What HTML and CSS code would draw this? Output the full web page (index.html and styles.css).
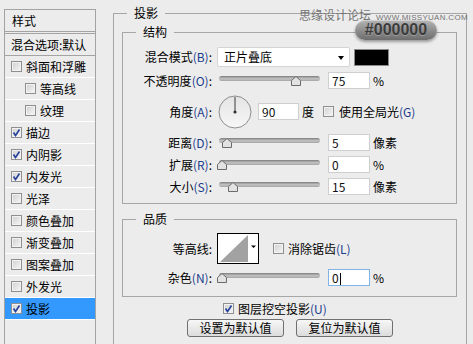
FILE: index.html
```html
<!DOCTYPE html>
<html lang="zh-CN">
<head>
  <meta charset="UTF-8">
  <title>图层样式 - 投影</title>
  <link rel="stylesheet" href="styles.css">
</head>
<body>

  <div class="dialog">
    <!-- 左侧样式列表 -->
    <ul class="style-list">
      <li class="head">样式</li>
      <li class="blend">混合选项:默认</li>
      <li><span class="cb"></span>斜面和浮雕</li>
      <li class="sub"><span class="cb"></span>等高线</li>
      <li class="sub"><span class="cb"></span>纹理</li>
      <li><span class="cb on"><svg viewBox="0 0 9 9"><path d="M1.5 4.5l2 3 4-6"/></svg></span>描边</li>
      <li><span class="cb on"><svg viewBox="0 0 9 9"><path d="M1.5 4.5l2 3 4-6"/></svg></span>内阴影</li>
      <li><span class="cb on"><svg viewBox="0 0 9 9"><path d="M1.5 4.5l2 3 4-6"/></svg></span>内发光</li>
      <li><span class="cb"></span>光泽</li>
      <li><span class="cb"></span>颜色叠加</li>
      <li><span class="cb"></span>渐变叠加</li>
      <li><span class="cb"></span>图案叠加</li>
      <li><span class="cb"></span>外发光</li>
      <li class="active"><span class="cb on"><svg viewBox="0 0 9 9"><path d="M1.5 4.5l2 3 4-6"/></svg></span>投影</li>
    </ul>

    <div class="panel">
      <div class="group outer">
        <span class="group-title">投影</span>

        <!-- 结构 -->
        <div class="group inner">
          <span class="group-title">结构</span>

          <div class="row r-mode">
            <span class="lbl">混合模式<span class="key">(B)</span>:</span>
            <div class="select">正片叠底</div>
            <div class="swatch"></div>
          </div>

          <div class="row">
            <span class="lbl">不透明度<span class="key">(O)</span>:</span>
            <div class="slider"><div class="track"></div><svg class="thumb" style="left:74px" viewBox="0 0 10 10"><polygon points="0.5,9.5 0.5,4.5 5,0.5 9.5,4.5 9.5,9.5"/></svg></div>
            <div class="num">75</div>
            <span class="unit">%</span>
          </div>

          <div class="row r-angle">
            <span class="lbl">角度<span class="key">(A)</span>:</span>
            <svg class="dial" viewBox="0 0 34 34">
              <defs>
                <linearGradient id="dialFill" x1="0" y1="0" x2="0" y2="1">
                  <stop offset="0" stop-color="#e4e4e4"/>
                  <stop offset="1" stop-color="#f7f7f7"/>
                </linearGradient>
              </defs>
              <circle cx="17" cy="17" r="16" fill="url(#dialFill)" stroke="#8e8e8e"/>
              <line x1="17" y1="17" x2="17" y2="2" stroke="#3a3a3a"/>
              <circle cx="17" cy="17" r="1.6" fill="#333"/>
            </svg>
            <div class="num short">90</div>
            <span class="unit">度</span>
            <span class="cb global"></span>
            <span class="cb-text">使用全局光<span class="key">(G)</span></span>
          </div>

          <div class="row">
            <span class="lbl">距离<span class="key">(D)</span>:</span>
            <div class="slider"><div class="track"></div><svg class="thumb" style="left:5px" viewBox="0 0 10 10"><polygon points="0.5,9.5 0.5,4.5 5,0.5 9.5,4.5 9.5,9.5"/></svg></div>
            <div class="num">5</div>
            <span class="unit">像素</span>
          </div>

          <div class="row">
            <span class="lbl">扩展<span class="key">(R)</span>:</span>
            <div class="slider"><div class="track"></div><svg class="thumb" style="left:0px" viewBox="0 0 10 10"><polygon points="0.5,9.5 0.5,4.5 5,0.5 9.5,4.5 9.5,9.5"/></svg></div>
            <div class="num">0</div>
            <span class="unit">%</span>
          </div>

          <div class="row">
            <span class="lbl">大小<span class="key">(S)</span>:</span>
            <div class="slider"><div class="track"></div><svg class="thumb" style="left:11px" viewBox="0 0 10 10"><polygon points="0.5,9.5 0.5,4.5 5,0.5 9.5,4.5 9.5,9.5"/></svg></div>
            <div class="num">15</div>
            <span class="unit">像素</span>
          </div>
        </div>

        <!-- 品质 -->
        <div class="group inner quality">
          <span class="group-title">品质</span>

          <div class="row r-contour">
            <span class="lbl">等高线:</span>
            <svg class="contour" viewBox="0 0 42 31">
              <rect x="0.5" y="0.5" width="41" height="30" fill="#fff" stroke="#000"/>
              <polygon points="3,29 31,2 31,29" fill="#a2a2a2"/>
              <polygon points="34,12.5 39,12.5 36.5,15" fill="#000"/>
            </svg>
            <span class="cb aa"></span>
            <span class="cb-text">消除锯齿<span class="key">(L)</span></span>
          </div>

          <div class="row">
            <span class="lbl">杂色<span class="key">(N)</span>:</span>
            <div class="slider"><div class="track"></div><svg class="thumb" style="left:0px" viewBox="0 0 10 10"><polygon points="0.5,9.5 0.5,4.5 5,0.5 9.5,4.5 9.5,9.5"/></svg></div>
            <div class="num focus">0<span class="caret"></span></div>
            <span class="unit">%</span>
          </div>
        </div>

        <div class="knockout">
          <span class="cb on"><svg viewBox="0 0 9 9"><path d="M1.5 4.5l2 3 4-6"/></svg></span>
          <span class="cb-text">图层挖空投影<span class="key">(U)</span></span>
        </div>

        <div class="buttons">
          <button class="btn">设置为默认值</button>
          <button class="btn">复位为默认值</button>
        </div>
      </div>
    </div>
  </div>

  <!-- 水印 -->
  <div class="watermark">思缘设计论坛<span class="url">WWW.MISSYUAN.COM</span></div>
  <div class="badge">#000000</div>

</body>
</html>
```

FILE: styles.css
```css
* { box-sizing: border-box; }
body {
  margin: 0;
  width: 473px;
  height: 344px;
  overflow: hidden;
  position: relative;
  background: #ececec;
  color: #000;
  font-family: "Noto Sans CJK SC", "Liberation Sans", sans-serif;
  font-size: 12px;
  line-height: 16px;
}
.dialog {
  display: flex;
  padding: 9px 0 0 4px;
}

/* 样式列表 */
.style-list {
  list-style: none;
  margin: 0;
  padding: 0;
  width: 92px;
  height: 340px;
  border: 1px solid #a3a3a3;
  border-bottom: 0;
  flex: none;
}
.style-list li {
  display: flex;
  align-items: center;
  height: 22px;
  padding-left: 6px;
  border-bottom: 1px solid #fff;
  white-space: nowrap;
}
.style-list .head {
  height: 24px;
  padding-left: 7px;
  border-bottom: 3px double #a3a3a3;
}
.style-list .blend {
  border-bottom-color: #a3a3a3;
}
.style-list .sub { padding-left: 20px; }
.style-list .active { background: #3399ff; }

.cb {
  display: inline-block;
  flex: none;
  width: 11px;
  height: 11px;
  margin-right: 4px;
  border: 1px solid #8f8f8f;
  background: linear-gradient(135deg, #cfcfcf, #f7f7f7);
  box-shadow: inset 0 0 0 1px #f2f2f2;
  position: relative;
}
.cb svg {
  position: absolute;
  left: 0;
  top: 0;
  width: 9px;
  height: 9px;
  fill: none;
  stroke: #24409a;
  stroke-width: 1.6;
}

/* 右侧 */
.panel {
  margin-left: 17px;
  padding-top: 4px;
}
.group {
  position: relative;
  border: 1px solid #a6a6a6;
}
.group-title {
  position: absolute;
  top: -9px;
  left: 13px;
  padding: 0 7px;
  background: #ececec;
}
.outer {
  width: 354px;
  height: 345px;
  padding: 18px 9px 0 8px;
}
.inner {
  display: flex;
  flex-direction: column;
  gap: 5px;
  padding: 14px 0 8px;
}
.quality {
  margin-top: 15px;
  padding: 13px 0 10px;
}
.row {
  display: flex;
  align-items: center;
  height: 17px;
  white-space: nowrap;
}
.lbl {
  width: 89px;
  flex: none;
  text-align: right;
}
.key { color: #1b3d8c; }

.r-mode { height: 20px; }
.select {
  position: relative;
  margin-left: 5px;
  width: 133px;
  height: 20px;
  padding-left: 6px;
  line-height: 18px;
  background: #fff;
  border: 1px solid #d4d4d4;
  border-radius: 2px;
}
.select::after {
  content: "";
  position: absolute;
  right: 5px;
  top: 8px;
  border: 3px solid transparent;
  border-top: 4px solid #000;
  border-bottom: 0;
}
.swatch {
  margin-left: 4px;
  width: 35px;
  height: 17px;
  background: #000;
  border: 1px solid #8a8a8a;
}

.slider {
  position: relative;
  margin-left: 5px;
  width: 104px;
  height: 11px;
  flex: none;
}
.track {
  position: absolute;
  left: 2px;
  right: 1px;
  top: 1px;
  height: 5px;
  border-radius: 3px;
  background: linear-gradient(#7e7e7e, #c4c4c4 55%, #a4a4a4);
}
.thumb {
  position: absolute;
  top: 1px;
  width: 10px;
  height: 10px;
  fill: #e2e2e2;
  stroke: #6b6b6b;
}
.num {
  margin-left: 7px;
  width: 42px;
  height: 17px;
  padding-left: 3px;
  line-height: 15px;
  background: #fff;
  border: 1px solid #cfcfcf;
  color: #111;
}
.num.short {
  margin-left: 6px;
  width: 41px;
}
.num.focus { border-color: #80b3e8; }
.caret {
  display: inline-block;
  width: 1px;
  height: 12px;
  margin-left: 1px;
  vertical-align: -2px;
  background: #000;
}
.unit { margin-left: 3px; }

.r-angle {
  height: 33px;
  margin: 1px 0;
}
.dial {
  margin-left: 6px;
  width: 34px;
  height: 34px;
  flex: none;
}
.global { margin-left: 9px; margin-right: 5px; }

.r-contour { height: 31px; }
.contour {
  margin-left: 5px;
  width: 42px;
  height: 31px;
  flex: none;
}
.aa { margin-left: 14px; }

.knockout {
  display: flex;
  align-items: center;
  height: 13px;
  margin-top: 5px;
  padding-left: 101px;
}
.buttons {
  display: flex;
  gap: 12px;
  margin-top: 4px;
  padding-left: 65px;
}
.btn {
  width: 97px;
  height: 18px;
  padding: 0;
  font: inherit;
  line-height: 16px;
  color: #000;
  background: linear-gradient(#f7f7f7, #dcdcdc);
  border: 1px solid #707070;
  border-radius: 3px;
}

/* 水印 */
.watermark {
  position: absolute;
  left: 299px;
  top: 7px;
  color: #747474;
  white-space: nowrap;
}
.watermark .url {
  margin-left: 5px;
  font-family: "Liberation Sans", sans-serif;
  font-size: 8px;
  letter-spacing: 0.3px;
}
.badge {
  position: absolute;
  left: 355px;
  top: 20px;
  width: 82px;
  height: 20px;
  border-radius: 10px;
  background: linear-gradient(#b4b4b4, #8c8c8c 55%, #6c6c6c);
  box-shadow: 0 2px 3px rgba(0,0,0,0.35), inset 0 1px 0 rgba(255,255,255,0.4);
  color: #3c3c3c;
  font: bold 16px/20px "Liberation Sans", sans-serif;
  text-align: center;
  text-shadow: 0 1px 0 rgba(255,255,255,0.25);
}
```
